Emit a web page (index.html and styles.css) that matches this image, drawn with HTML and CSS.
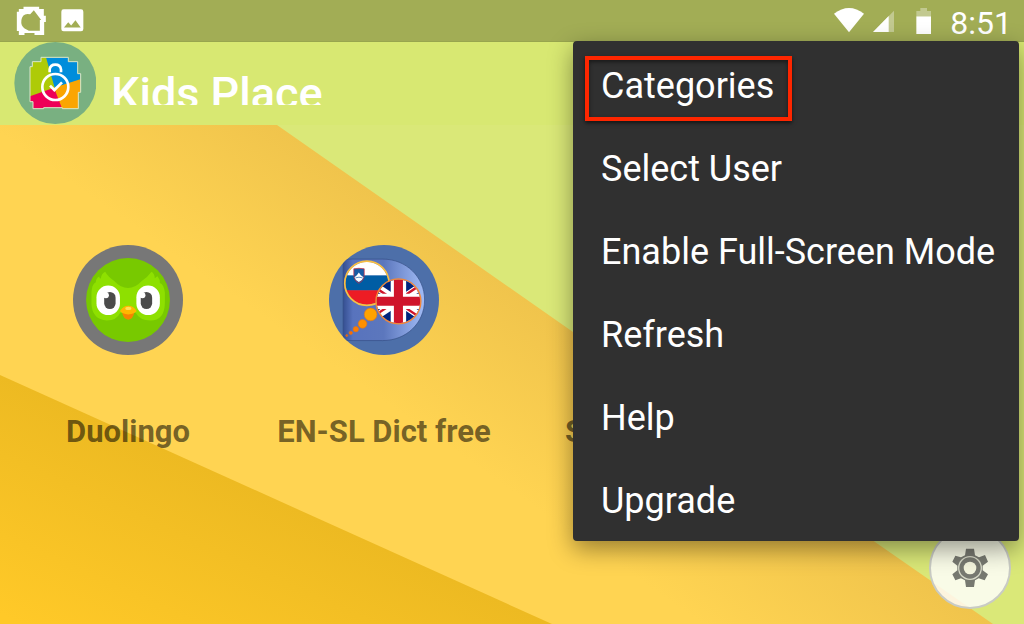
FILE: index.html
```
<!DOCTYPE html>
<html lang="en">
<head>
    <meta charset="UTF-8">
    <meta name="viewport" content="width=device-width, initial-scale=1.0">
    <title>Kids Place</title>
    <link rel="stylesheet" href="styles.css">
</head>
<body>
    <!-- Wallpaper -->
    <svg class="wallpaper" viewBox="0 0 1024 624" preserveAspectRatio="none" aria-hidden="true">
        <defs>
            <linearGradient id="band" gradientUnits="userSpaceOnUse" x1="425" y1="228" x2="330" y2="364">
                <stop offset="0" stop-color="#f0c44c"/>
                <stop offset="1" stop-color="#ffd452"/>
            </linearGradient>
            <linearGradient id="corner" gradientUnits="userSpaceOnUse" x1="200" y1="465" x2="110" y2="664">
                <stop offset="0" stop-color="#edba22"/>
                <stop offset="1" stop-color="#ffc928"/>
            </linearGradient>
        </defs>
        <rect width="1024" height="624" fill="#dae878"/>
        <path d="M0 0H97L277 125L573 332L993 624H0Z" fill="url(#band)"/>
        <path d="M0 375L552 624H0Z" fill="url(#corner)"/>
    </svg>

    <div class="status-bar">
        <svg width="31" height="30" viewBox="48 18 92 90" aria-hidden="true">
            <path fill="#fff" fill-rule="evenodd" d="M70 20H117V27H131V47H137V66H132V105H103V99H73V105H56V93H50V35H56V27H70ZM101 31L90 43Q77 39 69 47Q60 60 65 76Q71 87 86 92H119V60H123Z"/>
        </svg>
        <svg width="23" height="23" viewBox="184 28 70 70" aria-hidden="true">
            <rect x="185" y="29" width="67" height="67" rx="7" fill="#fff"/>
            <path d="M193 84L206 68L215 78L228 62L244 84Z" fill="#a2ad55"/>
        </svg>
        <div class="status-right">
            <svg width="30" height="26" viewBox="42 24 90 78" aria-hidden="true">
                <path d="M42 41Q87 7 132 41L87 97Z" fill="#fff"/>
            </svg>
            <svg width="21" height="26" viewBox="160 24 63 78" aria-hidden="true">
                <path d="M160 96L223 32V96Z" fill="#fff" opacity=".35"/>
                <path d="M160 96L207 48V96Z" fill="#fff"/>
            </svg>
            <svg class="battery" width="15" height="26" viewBox="288 24 45 78" aria-hidden="true">
                <path d="M289 33H301V24H321V33H333V49H289Z" fill="#fff" opacity=".35"/>
                <path d="M289 49H333V102H289Z" fill="#fff"/>
            </svg>
            <span class="clock">8:51</span>
        </div>
    </div>

    <header class="toolbar">
        <svg width="82" height="82" viewBox="42 6 246 246" aria-hidden="true">
            <defs>
                <clipPath id="house">
                    <path d="M123 52H205V65H233V101H242V157H235V206H187V203H131V206H99V185H90V80H97V65H123Z"/>
                </clipPath>
            </defs>
            <circle cx="166" cy="129" r="123" fill="#79b081"/>
            <g clip-path="url(#house)">
                <rect x="85" y="48" width="160" height="165" fill="#aecb08"/>
                <path d="M136 45H250V117L164 143Z" fill="#008ddb"/>
                <path d="M162 143L250 115V215H187Z" fill="#faa502"/>
                <path d="M80 172L162 143L190 215H80Z" fill="#ee0057"/>
            </g>
            <path d="M123 52H205V65H233V101H242V157H235V206H187V203H131V206H99V185H90V80H97V65H123Z" fill="none" stroke="#dbe6cb" stroke-width="3" stroke-linejoin="round"/>
            <path d="M149 97V88Q151 74 166 74Q181 74 183 88V97" fill="none" stroke="#fff" stroke-width="8"/>
            <circle cx="166" cy="141" r="39" fill="none" stroke="#fff" stroke-width="8"/>
            <path d="M150 137L163 150L186 127" fill="none" stroke="#fff" stroke-width="8"/>
        </svg>
        <h1 class="title">Kids Place</h1>
    </header>

    <main class="apps">
        <button class="app" type="button">
            <svg width="110" height="110" viewBox="41 30 328 328" aria-hidden="true">
                <circle cx="205" cy="194" r="164" fill="#777"/>
                <circle cx="205" cy="194" r="125" fill="#78c900"/>
                <path d="M96 172Q98 145 109 141Q109 130 119 124Q121 133 124 129Q127 114 137 110Q146 126 164 137Q183 158 205 158Q227 158 246 137Q264 126 275 110Q284 115 285 129Q290 124 293 123Q301 133 300 143Q312 147 315 172V202Q314 255 272 255Q240 255 228 232H182Q171 255 142 255Q98 252 96 205Z" fill="#8ee000"/>
                <rect x="111" y="151" width="70" height="88" rx="35" fill="#fff"/>
                <rect x="230" y="151" width="70" height="88" rx="35" fill="#fff"/>
                <rect x="134" y="170" width="34" height="51" rx="17" fill="#4b4b4b"/>
                <rect x="243" y="170" width="34" height="51" rx="17" fill="#4b4b4b"/>
                <circle cx="139" cy="180" r="9" fill="#fff"/>
                <circle cx="248" cy="180" r="9" fill="#fff"/>
                <path d="M187 230Q191 252 206 253Q220 252 224 230Z" fill="#f68400"/>
                <path d="M181 227Q191 211 206 211Q221 211 231 227Q225 236 206 237Q187 236 181 227Z" fill="#ffb800"/>
                <ellipse cx="206" cy="219" rx="9" ry="5" fill="#ffdf55"/>
            </svg>
            <span class="app-name">Duolingo</span>
        </button>
        <button class="app" type="button">
            <svg width="110" height="110" viewBox="30 30 328 328" aria-hidden="true">
                <defs>
                    <linearGradient id="book" x1="0" x2="1">
                        <stop offset="0" stop-color="#354f91"/>
                        <stop offset=".12" stop-color="#5873bd"/>
                        <stop offset=".5" stop-color="#5c77bd"/>
                        <stop offset="1" stop-color="#a2bcf6"/>
                    </linearGradient>
                    <clipPath id="disc"><circle cx="194" cy="194" r="164"/></clipPath>
                    <clipPath id="sl"><circle cx="143" cy="144" r="64"/></clipPath>
                    <clipPath id="uk"><circle cx="237" cy="198" r="65"/></clipPath>
                </defs>
                <circle cx="194" cy="194" r="164" fill="#4d6fa9"/>
                <path d="M72 72H190C260 72 315 125 315 194S260 315 190 315H72Z" fill="url(#book)" stroke="#344e84" stroke-width="2" clip-path="url(#disc)"/>
                <g clip-path="url(#sl)">
                    <rect x="75" y="75" width="140" height="46" fill="#fff"/>
                    <rect x="75" y="121" width="140" height="44" fill="#005da4"/>
                    <rect x="75" y="165" width="140" height="50" fill="#ed1c24"/>
                </g>
                <path d="M104 101Q119 98 135 101V120Q134 137 119 144Q105 137 104 120Z" fill="#175ca4" stroke="#d6273a" stroke-width="2"/>
                <path d="M106 126L113 120L119 112L125 120L133 126Q130 135 119 140Q108 135 106 126Z" fill="#fff"/>
                <path d="M109 128Q119 124 130 128" fill="none" stroke="#175ca4" stroke-width="2"/>
                <circle cx="143" cy="144" r="66" fill="none" stroke="#f9bf42" stroke-width="5"/>
                <g clip-path="url(#uk)">
                    <rect x="170" y="130" width="135" height="135" fill="#00247d"/>
                    <path d="M140 133L334 263M334 133L140 263" stroke="#fff" stroke-width="22"/>
                    <path d="M140 138L237 203M334 128L237 193M140 258L237 193M334 268L237 203" stroke="#cf142b" stroke-width="7"/>
                    <path d="M237 130V266M170 198H305" stroke="#fff" stroke-width="46"/>
                    <path d="M237 130V266M170 198H305" stroke="#cf142b" stroke-width="27"/>
                </g>
                <circle cx="237" cy="198" r="67" fill="none" stroke="#f58634" stroke-width="4"/>
                <g stroke="#d97723" stroke-width="2">
                    <circle cx="154" cy="237" r="19" fill="#ffa300"/>
                    <circle cx="130" cy="265" r="13" fill="#ff9000"/>
                    <circle cx="110" cy="281" r="8" fill="#ff7d00"/>
                    <circle cx="95" cy="292" r="5" fill="#ff6a00"/>
                    <circle cx="83" cy="300" r="3" fill="#fa5600"/>
                </g>
            </svg>
            <span class="app-name">EN-SL Dict free</span>
        </button>
        <button class="app" type="button">
            <span class="app-blank"></span>
            <span class="app-name">SL-EN Dict</span>
        </button>
    </main>

    <button class="settings" type="button" aria-label="Settings">
        <svg width="36" height="40" viewBox="157 146 108 120" aria-hidden="true">
            <path d="M199 148H223L226 168L238 174L256 167L265 187L249 199V213L265 225L255 243L237 237L226 243L223 263H199L196 243L184 237L167 243L158 225L173 213V199L158 187L167 169L184 174L196 168Z" fill="#777970"/>
            <circle cx="211" cy="206" r="34" fill="none" stroke="#d6d8c6" stroke-width="4"/>
            <circle cx="211" cy="206" r="19" fill="#f4f5dd"/>
        </svg>
    </button>

    <nav class="menu">
        <button class="menu-item highlight" type="button">Categories</button>
        <button class="menu-item" type="button">Select User</button>
        <button class="menu-item" type="button">Enable Full-Screen Mode</button>
        <button class="menu-item" type="button">Refresh</button>
        <button class="menu-item" type="button">Help</button>
        <button class="menu-item" type="button">Upgrade</button>
    </nav>
</body>
</html>
```
FILE: styles.css
```
*, *::after {
    box-sizing: border-box;
}
body {
    margin: 0;
    min-height: 100vh;
    position: relative;
    overflow: hidden;
    display: flex;
    flex-direction: column;
    font-family: Roboto, "Liberation Sans", sans-serif;
}
svg {
    display: block;
    flex-shrink: 0;
}
button {
    border: 0;
    padding: 0;
    background: none;
    font-family: inherit;
    cursor: pointer;
}
.wallpaper {
    position: absolute;
    top: 0;
    left: 0;
    width: 100%;
    height: 100%;
    z-index: -1;
}

/* status bar */
.status-bar {
    display: flex;
    align-items: center;
    gap: 14px;
    padding: 0 12px 0 16px;
    height: 42px;
    background: #a2ad55;
    border-bottom: 1px solid #98a54e;
}
.status-right {
    display: flex;
    align-items: center;
    gap: 9px;
    margin-left: auto;
}
.battery {
    margin: 0 10px 0 13px;
}
.clock {
    color: #fff;
    font-size: 32px;
    line-height: 40px;
    padding-top: 4px;
}

/* toolbar */
.toolbar {
    display: flex;
    align-items: flex-start;
    gap: 15px;
    height: 83px;
    padding-left: 14px;
    background: #d8e872;
}
/* the title is cut at the baseline */
.title {
    margin: 27px 0 0;
    height: 36px;
    overflow: hidden;
    color: #fff;
    font-size: 45px;
    font-weight: 500;
    line-height: 50px;
}

/* app grid */
.apps {
    display: grid;
    grid-template-columns: repeat(4, 1fr);
    align-items: start;
    padding-top: 120px;
}
.app {
    display: flex;
    flex-direction: column;
    align-items: center;
    gap: 57px;
}
.app-blank {
    width: 110px;
    height: 110px;
}
.app-name {
    color: rgba(0, 0, 0, 0.55);
    font-size: 31px;
    font-weight: 700;
    line-height: 40px;
    white-space: nowrap;
}

/* round settings button */
.settings {
    position: absolute;
    right: 13px;
    bottom: 15px;
    display: flex;
    align-items: center;
    justify-content: center;
    width: 82px;
    height: 82px;
    border: 2px solid #c9cbc4;
    border-radius: 50%;
    background: rgba(255, 255, 255, 0.82);
}

/* overflow menu */
.menu {
    position: absolute;
    top: 41px;
    right: 5px;
    display: flex;
    flex-direction: column;
    width: 446px;
    padding: 1px 0;
    border-radius: 4px;
    background: #303030;
    box-shadow: 0 8px 24px rgba(0, 0, 0, 0.4);
}
.menu-item {
    position: relative;
    height: 83px;
    padding: 4px 28px 0;
    color: #fff;
    font-size: 36px;
    line-height: 42px;
    text-align: left;
    white-space: nowrap;
}
.highlight::after {
    content: "";
    position: absolute;
    top: 14px;
    left: 12px;
    width: 207px;
    height: 65px;
    border: 4px solid #fe2600;
    box-shadow: 0 2px 4px rgba(0, 0, 0, 0.6), inset 0 2px 4px rgba(0, 0, 0, 0.5);
}
```
